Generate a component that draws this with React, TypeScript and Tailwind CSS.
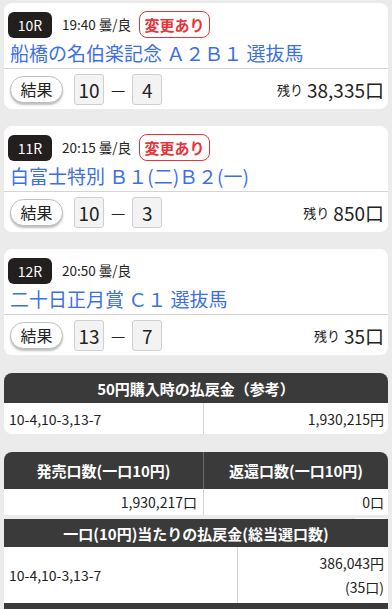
import React from 'react';

interface Race {
  no: string;
  time: string;
  changed: boolean;
  name: string;
  first: string;
  second: string;
  remain: string;
}

const RACES: Race[] = [
  { no: '10R', time: '19:40 曇/良', changed: true, name: '船橋の名伯楽記念 Ａ２Ｂ１ 選抜馬', first: '10', second: '4', remain: '38,335口' },
  { no: '11R', time: '20:15 曇/良', changed: true, name: '白富士特別 Ｂ１(二)Ｂ２(一)', first: '10', second: '3', remain: '850口' },
  { no: '12R', time: '20:50 曇/良', changed: false, name: '二十日正月賞 Ｃ１ 選抜馬', first: '13', second: '7', remain: '35口' },
];

const RaceCard: React.FC<{ race: Race }> = ({ race }) => (
  <div className="mx-1 h-[106px] rounded-lg bg-white overflow-hidden">
    <div className="h-[66px] px-1 pt-2 border-b border-[#d4d4d4]">
      <div className="flex items-center h-[27px]">
        <span className="shrink-0 flex items-center justify-center w-[44px] h-[26px] rounded-md bg-[#231f1e] text-white text-[14px] leading-none">
          {race.no}
        </span>
        <span className="shrink-0 ml-[10px] text-[13.5px] leading-none text-[#222]">{race.time}</span>
        {race.changed && (
          <span className="shrink-0 ml-2 flex items-center justify-center w-[71px] h-[27px] rounded-lg border border-[#e8333a] text-[#e8333a] text-[15px] leading-none font-bold">
            変更あり
          </span>
        )}
      </div>
      <div className="mt-px h-[28px] leading-[28px] pl-[2px] text-[19px] text-[#3c6fe6] whitespace-nowrap">
        {race.name}
      </div>
    </div>
    <div className="flex items-center h-[40px] px-1">
      <button className="shrink-0 ml-[2px] w-[53px] h-[27px] rounded-full border border-[#bdbdbd] bg-white text-[16px] leading-none text-[#222] shadow-[0_2px_2px_rgba(0,0,0,0.25)]">
        結果
      </button>
      <span className="shrink-0 ml-[11px] flex items-center justify-center w-[30px] h-[31px] rounded-[3px] border border-[#cfcfcf] bg-[#f3f3f3] text-[19px] leading-none text-[#222]">
        {race.first}
      </span>
      <span className="mx-[7px] text-[16px] leading-none text-[#222]">—</span>
      <span className="shrink-0 flex items-center justify-center w-[30px] h-[31px] rounded-[3px] border border-[#cfcfcf] bg-[#f3f3f3] text-[19px] leading-none text-[#222]">
        {race.second}
      </span>
      <span className="ml-auto text-[13px] leading-none text-[#222]">残り</span>
      <span className="ml-1 text-[19px] leading-none text-[#222]">{race.remain}</span>
    </div>
  </div>
);

export default function App() {
  return (
    <div
      className="h-[609px] overflow-hidden bg-[#ebebeb] pt-[3px] text-[#222]"
      style={{ fontFamily: '"Noto Sans CJK JP", "Noto Sans", sans-serif' }}
    >
      <div className="flex flex-col gap-[17px]">
        {RACES.map(r => (
          <RaceCard key={r.no} race={r} />
        ))}
      </div>

      {/* 50円購入時 */}
      <div className="mx-1 mt-[18px] rounded-lg overflow-hidden bg-white">
        <div className="h-[30px] flex items-center justify-center bg-[#3a3a3a] text-white text-[15px] leading-none font-bold">
          50円購入時の払戻金（参考）
        </div>
        <div className="flex h-[31px] text-[14px] leading-none">
          <div className="w-[200px] flex items-center pl-[5px] border-r border-[#d4d4d4]">10-4,10-3,13-7</div>
          <div className="flex-1 flex items-center justify-end pr-1">1,930,215円</div>
        </div>
      </div>

      {/* 発売口数 / 返還口数 */}
      <div className="mx-1 mt-[18px] rounded-t-lg overflow-hidden bg-white">
        <div className="flex h-[37px] bg-[#3a3a3a] text-white text-[15px] leading-none font-bold">
          <div className="w-[200px] flex items-center justify-center border-r border-[#6a6a6a]">発売口数(一口10円)</div>
          <div className="flex-1 flex items-center justify-center">返還口数(一口10円)</div>
        </div>
        <div className="flex h-[26px] text-[14px] leading-none">
          <div className="w-[200px] flex items-center justify-end pr-[6px] border-r border-[#d4d4d4]">1,930,217口</div>
          <div className="flex-1 flex items-center justify-end pr-1">0口</div>
        </div>
      </div>
      <div className="mx-1 h-[4px] flex items-end justify-end">
        <div className="w-[30px] h-px bg-white mr-[3px]" />
      </div>

      {/* 一口当たり */}
      <div className="mx-1 bg-white">
        <div className="h-[28px] flex items-center justify-center bg-[#3a3a3a] text-white text-[15px] leading-none font-bold">
          一口(10円)当たりの払戻金(総当選口数)
        </div>
        <div className="flex h-[56px] text-[14px]">
          <div className="w-[234px] flex items-center pl-[5px] border-r border-[#d4d4d4]">10-4,10-3,13-7</div>
          <div className="flex-1 flex flex-col items-end justify-center pr-1 leading-[24px]">
            <span>386,043円</span>
            <span>(35口)</span>
          </div>
        </div>
        <div className="h-[10px] bg-[#3a3a3a]" />
      </div>
    </div>
  );
}
